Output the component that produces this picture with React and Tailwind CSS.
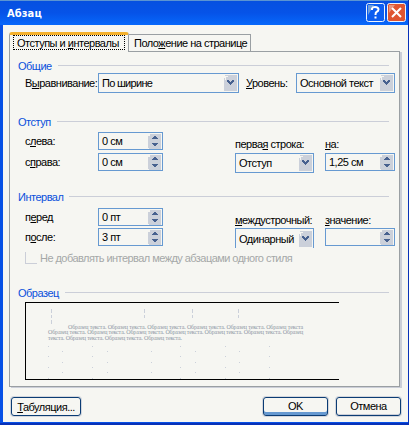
import React from 'react';

const Label = ({ children, className = '' }) => (
    <span className={`block whitespace-pre leading-[14px] ${className}`}>{children}</span>
);

const Group = ({ title, className = '' }) => (
    <div className={`flex h-[14px] items-center gap-[6px] pl-2 pr-[10px] ${className}`}>
        <span className="whitespace-pre leading-[14px] text-[#0a50dc]">{title}</span>
        <span className="mb-[2px] h-px flex-1 bg-[#cbced8]" />
    </div>
);

const Select = ({ value, className = '', text = '' }) => (
    <div className={`flex h-5 shrink-0 items-center justify-between border border-[#6699d1] pl-[3px] pr-px ${className}`}>
        <span className={`whitespace-pre leading-[14px] ${text}`}>{value}</span>
        <svg className="shrink-0" width="13" height="16" viewBox="0 0 13 16" shapeRendering="crispEdges">
            <path d="M1 0H13V16H0V3H1Z" fill="#cbd0da" />
            <path d="M1 1H4V2H2V5H1Z" fill="#f6f6f2" />
            <path d="M3 5H5V6H6V7H7V6H8V5H10V7H9V8H8V9H7V10H6V9H5V8H4V7H3Z" fill="#47618f" />
        </svg>
    </div>
);

const Spinner = ({ value, className = '' }) => (
    <div className={`flex h-[18px] shrink-0 items-center justify-between border border-[#6699d1] pl-[3px] pr-px ${className}`}>
        <span className="whitespace-pre leading-[14px]">{value}</span>
        <svg className="shrink-0" width="13" height="15" viewBox="0 0 13 15" shapeRendering="crispEdges">
            <path d="M2 0H13V15H1V14H0V2H2Z" fill="#cbd0da" />
            <path d="M6 2H8V3H9V4H10V5H4V4H5V3H6Z" fill="#47618f" />
            <path d="M4 9H10V10H9V11H8V12H6V11H5V10H4Z" fill="#47618f" />
        </svg>
    </div>
);

const Button = ({ children, className = '' }) => (
    <button className={`flex h-[19px] items-center justify-center rounded-[3px] border border-[#0b3c74] ring-1 ring-[#d3d6dc] ${className}`}>
        {children}
    </button>
);

const rowA = [48, 92, 180, 225, 269];
const rowB = [62, 107, 151, 195, 239];

const Preview = () => (
    <div className="relative ml-[15px] mt-[2px] h-[78px] w-[314px] border-y border-l border-black">
        <svg className="absolute inset-0" width="313" height="76" viewBox="26 303 313 76" shapeRendering="crispEdges" fill="#cbd0da">
            {[51, 144, 192, 238].map((x) => (
                <g key={x}>
                    <rect x={x} y="309" width="1" height="4" />
                    <rect x={x} y="315" width="1" height="3" />
                </g>
            ))}
            <rect x="51" y="320" width="1" height="4" />
            {[346, 356, 367, 378].map((y) => rowA.map((x) => <rect key={`${x}-${y}`} x={x} y={y} width="1" height="1" />))}
            {[351, 362, 372].map((y) => rowB.map((x) => <rect key={`${x}-${y}`} x={x} y={y} width="1" height="1" />))}
        </svg>
        <div className="relative pl-[22px] pt-[22px] font-['Liberation_Serif',serif] text-[6px] leading-[5.3px] tracking-[-0.17px] text-[#8d96a4]">
            <p className="whitespace-pre pl-5 tracking-[-0.14px]">Образец текста. Образец текста. Образец текста. Образец текста. Образец текста. Образец текста</p>
            <p className="whitespace-pre">Образец текста. Образец текста. Образец текста. Образец текста. Образец текста. Образец текста. Образец</p>
            <p className="whitespace-pre">текста. Образец текста. Образец текста. Образец текста.</p>
        </div>
    </div>
);

export default function App() {
    return (
        <div className="flex h-[425px] w-[409px] flex-col overflow-hidden border-b-2 border-r border-[#0831b8] bg-[#0650e6] font-['Liberation_Sans',Arial,sans-serif] text-[11px] tracking-[-0.5px] text-black">
            {/* Title bar */}
            <div className="flex h-[25px] shrink-0 justify-between border-t border-[#5b94d2] bg-linear-to-b from-[#0650e0] via-[#0653e8] to-[#0868fb] pl-[7px] pr-[2px]">
                <span className="pt-[5px] font-['DejaVu_Sans_Condensed','DejaVu_Sans',sans-serif] text-[11px] font-bold leading-[16px] tracking-[0.1px] text-white">Абзац</span>
                <div className="flex gap-[2px] pt-[2px]">
                    <svg width="19" height="19" viewBox="0 0 19 19">
                        <rect x=".5" y=".5" width="18" height="18" rx="2" fill="#0b5df0" stroke="#eef4fc" />
                        <path d="M2 2H8L2 12Z" fill="#6d9ddb" />
                        <path d="M6 7V5.500Q6.500 4 9 4Q12.500 4 12.500 6.500Q12.500 8 10.500 9Q9.500 9.500 9.500 12M9.500 13.500V15.500" fill="none" stroke="#fff" strokeWidth="2" />
                    </svg>
                    <svg width="19" height="19" viewBox="0 0 19 19">
                        <rect x=".5" y=".5" width="18" height="18" rx="2" fill="#df5531" stroke="#eef4fc" />
                        <path d="M2 2H8L2 10Z" fill="#e8957e" />
                        <path d="M5 5L14 14M14 5L5 14" stroke="#fff" strokeWidth="2" />
                    </svg>
                </div>
            </div>

            <div className="mb-px ml-[3px] flex-1 bg-[#f6f6f2] pl-[6px] pr-[5px] pt-[7px]">
                {/* Tabs */}
                <div className="flex h-[19px] items-end">
                    <div className="relative z-10 -mb-px h-5 w-[120px] rounded-t-[3px] border-x border-t-[3px] border-[#9a9fa3] border-t-[#f5b12d] bg-[#f6f6f2] px-[3px]">
                        <div className="h-[15px] border border-dotted border-black pl-[3px]">
                            <Label>Отступы и <u>и</u>нтервалы</Label>
                        </div>
                    </div>
                    <div className="h-[17px] w-[122px] border-r border-t border-[#9a9fa3] pl-[5px] pt-px">
                        <Label>Поло<u>ж</u>ение на странице</Label>
                    </div>
                </div>

                {/* Tab page */}
                <div className="h-[336px] w-[391px] border border-[#9a9fa3] pt-[7px] shadow-[2px_1px_0_#cbced8]">
                    <Group title="Общие" />
                    <div className="flex h-5 items-center pl-[15px]">
                        <Label className="w-[73px]">В<u>ы</u>равнивание:</Label>
                        <Select value="По ширине" className="w-[141px]" text="tracking-[-0.7px]" />
                        <Label className="ml-[7px] w-[50px]"><u>У</u>ровень:</Label>
                        <Select value="Основной текст" className="w-[99px]" />
                    </div>

                    <Group title="Отступ" className="mt-[22px]" />
                    <div className="mt-[3px] flex pl-[15px]">
                        <div className="flex w-[210px] flex-col gap-[3px]">
                            <div className="flex items-center">
                                <Label className="w-[73px]">с<u>л</u>ева:</Label>
                                <Spinner value="0 см" className="w-[65px]" />
                            </div>
                            <div className="flex items-center">
                                <Label className="w-[73px]">с<u>п</u>рава:</Label>
                                <Spinner value="0 см" className="w-[65px]" />
                            </div>
                        </div>
                        <div className="w-[90px]">
                            <Label className="mb-[2px] mt-[5px]">перва<u>я</u> строка:</Label>
                            <Select value="Отступ" className="w-[79px]" />
                        </div>
                        <div>
                            <Label className="mb-[2px] mt-[5px]"><u>н</u>а:</Label>
                            <Spinner value="1,25 см" className="w-[70px]" />
                        </div>
                    </div>

                    <Group title="Интервал" className="mt-[17px]" />
                    <div className="mt-1 flex pl-[15px]">
                        <div className="flex w-[210px] flex-col gap-[2px]">
                            <div className="flex items-center">
                                <Label className="w-[73px]">п<u>е</u>ред</Label>
                                <Spinner value="0 пт" className="w-[65px]" />
                            </div>
                            <div className="flex items-center">
                                <Label className="w-[73px]">п<u>о</u>сле:</Label>
                                <Spinner value="3 пт" className="w-[65px]" />
                            </div>
                        </div>
                        <div className="w-[90px]">
                            <Label className="mb-px mt-[5px]"><u>м</u>еждустрочный:</Label>
                            <Select value="Одинарный" className="w-[79px] border-b-0" />
                        </div>
                        <div>
                            <Label className="mb-px mt-[5px]"><u>з</u>начение:</Label>
                            <Spinner value="" className="w-[70px]" />
                        </div>
                    </div>
                    <div className="mt-[3px] flex h-[13px] items-center gap-[3px] pl-[15px] text-[#a5a8a8]">
                        <span className="h-3 w-3 border-b border-l border-[#cbced8]" />
                        <Label className="tracking-[-0.55px]">Не добавлять интервал между абзацами одного стиля</Label>
                    </div>

                    <Group title="Образец" className="mt-[22px]" />
                    <Preview />
                </div>

                {/* Dialog buttons */}
                <div className="mt-[10px] flex pl-[2px]">
                    <Button className="w-[70px]"><Label><u>Т</u>абуляция...</Label></Button>
                    <Button className="ml-[182px] w-[65px] shadow-[inset_0_-3px_0_#6699d1]">OK</Button>
                    <Button className="ml-2 w-[65px] shadow-[inset_0_-1px_0_#cbced8]">Отмена</Button>
                </div>
            </div>
        </div>
    );
}
